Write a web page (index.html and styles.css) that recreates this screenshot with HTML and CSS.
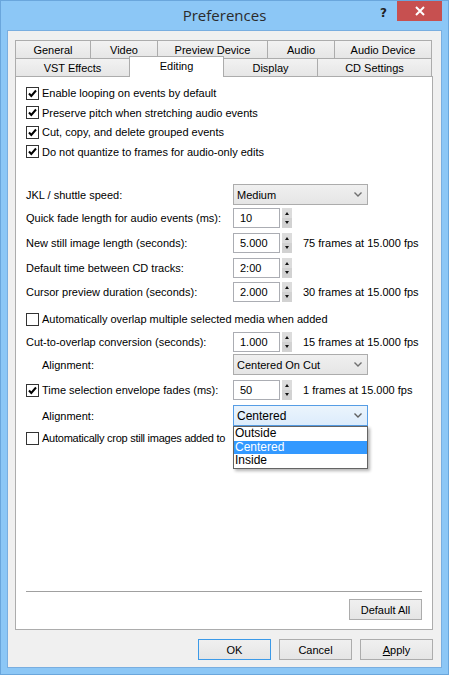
FILE: index.html
```html
<!DOCTYPE html>
<html>
<head>
<meta charset="utf-8">
<title>Preferences</title>
<link rel="stylesheet" href="styles.css">
</head>
<body>
<div class="window">
  <div class="titlebar">
    <div></div>
    <div class="title">Preferences</div>
    <div class="caption-btns">
      <span class="help">?</span>
      <span class="close"><svg width="10" height="10" viewBox="0 0 10 10"><path d="M1 1 L9 9 M9 1 L1 9" stroke="#fff" stroke-width="2"/></svg></span>
    </div>
  </div>
  <div class="client">
    <div class="tabs">
      <div class="tabrow row1">
        <div class="tab w76">General</div>
        <div class="tab w68">Video</div>
        <div class="tab w111">Preview Device</div>
        <div class="tab w68">Audio</div>
        <div class="tab w98 last">Audio Device</div>
      </div>
      <div class="tabrow row2">
        <div class="tab w115">VST Effects</div>
        <div class="tab w95 active">Editing</div>
        <div class="tab w95">Display</div>
        <div class="tab w115 last">CD Settings</div>
      </div>
    </div>
    <div class="panel">
      <div class="content">
        <div class="cbrow h20"><span class="cb checked"><svg width="11" height="11" viewBox="0 0 11 11"><path d="M2 5.5 L4.3 8 L9 2.5" fill="none" stroke="#000" stroke-width="2"/></svg></span><span>Enable looping on events by default</span></div>
        <div class="cbrow h19"><span class="cb checked"><svg width="11" height="11" viewBox="0 0 11 11"><path d="M2 5.5 L4.3 8 L9 2.5" fill="none" stroke="#000" stroke-width="2"/></svg></span><span>Preserve pitch when stretching audio events</span></div>
        <div class="cbrow h20"><span class="cb checked"><svg width="11" height="11" viewBox="0 0 11 11"><path d="M2 5.5 L4.3 8 L9 2.5" fill="none" stroke="#000" stroke-width="2"/></svg></span><span>Cut, copy, and delete grouped events</span></div>
        <div class="cbrow h19"><span class="cb checked"><svg width="11" height="11" viewBox="0 0 11 11"><path d="M2 5.5 L4.3 8 L9 2.5" fill="none" stroke="#000" stroke-width="2"/></svg></span><span>Do not quantize to frames for audio-only edits</span></div>

        <div class="row h21 mt23">
          <span class="label">JKL / shuttle speed:</span>
          <div class="combo"><span>Medium</span><svg class="chev" width="8" height="5" viewBox="0 0 8 5"><path d="M0.5 0.5 L4 4 L7.5 0.5" fill="none" stroke="#707070" stroke-width="1.4"/></svg></div>
        </div>
        <div class="row h20 mt3">
          <span class="label">Quick fade length for audio events (ms):</span>
          <div class="spin"><span class="input">10</span><svg class="arrows" width="10" height="20" viewBox="0 0 10 20"><rect x="0" y="0" width="10" height="20" fill="#dcdcdc"/><rect x="0" y="10" width="10" height="10" fill="#d2d2d2"/><path d="M3 7 L5 4 L7 7 Z" fill="#111"/><path d="M3 13 L5 16 L7 13 Z" fill="#111"/></svg></div>
        </div>
        <div class="row h20 mt5">
          <span class="label">New still image length (seconds):</span>
          <div class="spin"><span class="input">5.000</span><svg class="arrows" width="10" height="20" viewBox="0 0 10 20"><rect x="0" y="0" width="10" height="20" fill="#dcdcdc"/><rect x="0" y="10" width="10" height="10" fill="#d2d2d2"/><path d="M3 7 L5 4 L7 7 Z" fill="#111"/><path d="M3 13 L5 16 L7 13 Z" fill="#111"/></svg></div>
          <span class="note">75 frames at 15.000 fps</span>
        </div>
        <div class="row h20 mt5">
          <span class="label">Default time between CD tracks:</span>
          <div class="spin"><span class="input">2:00</span><svg class="arrows" width="10" height="20" viewBox="0 0 10 20"><rect x="0" y="0" width="10" height="20" fill="#dcdcdc"/><rect x="0" y="10" width="10" height="10" fill="#d2d2d2"/><path d="M3 7 L5 4 L7 7 Z" fill="#111"/><path d="M3 13 L5 16 L7 13 Z" fill="#111"/></svg></div>
        </div>
        <div class="row h20 mt4">
          <span class="label">Cursor preview duration (seconds):</span>
          <div class="spin"><span class="input">2.000</span><svg class="arrows" width="10" height="20" viewBox="0 0 10 20"><rect x="0" y="0" width="10" height="20" fill="#dcdcdc"/><rect x="0" y="10" width="10" height="10" fill="#d2d2d2"/><path d="M3 7 L5 4 L7 7 Z" fill="#111"/><path d="M3 13 L5 16 L7 13 Z" fill="#111"/></svg></div>
          <span class="note">30 frames at 15.000 fps</span>
        </div>

        <div class="cbrow h20 mt7"><span class="cb"></span><span>Automatically overlap multiple selected media when added</span></div>
        <div class="row h20 mt3">
          <span class="label">Cut-to-overlap conversion (seconds):</span>
          <div class="spin"><span class="input">1.000</span><svg class="arrows" width="10" height="20" viewBox="0 0 10 20"><rect x="0" y="0" width="10" height="20" fill="#dcdcdc"/><rect x="0" y="10" width="10" height="10" fill="#d2d2d2"/><path d="M3 7 L5 4 L7 7 Z" fill="#111"/><path d="M3 13 L5 16 L7 13 Z" fill="#111"/></svg></div>
          <span class="note">15 frames at 15.000 fps</span>
        </div>
        <div class="row h21 mt2">
          <span class="label indent">Alignment:</span>
          <div class="combo"><span>Centered On Cut</span><svg class="chev" width="8" height="5" viewBox="0 0 8 5"><path d="M0.5 0.5 L4 4 L7.5 0.5" fill="none" stroke="#707070" stroke-width="1.4"/></svg></div>
        </div>
        <div class="row h20 mt5">
          <span class="label cblabel"><span class="cb checked"><svg width="11" height="11" viewBox="0 0 11 11"><path d="M2 5.5 L4.3 8 L9 2.5" fill="none" stroke="#000" stroke-width="2"/></svg></span><span>Time selection envelope fades (ms):</span></span>
          <div class="spin"><span class="input">50</span><svg class="arrows" width="10" height="20" viewBox="0 0 10 20"><rect x="0" y="0" width="10" height="20" fill="#dcdcdc"/><rect x="0" y="10" width="10" height="10" fill="#d2d2d2"/><path d="M3 7 L5 4 L7 7 Z" fill="#111"/><path d="M3 13 L5 16 L7 13 Z" fill="#111"/></svg></div>
          <span class="note">1 frames at 15.000 fps</span>
        </div>
        <div class="row h21 mt5">
          <span class="label indent">Alignment:</span>
          <div class="combo focused"><span>Centered</span><svg class="chev" width="8" height="5" viewBox="0 0 8 5"><path d="M0.5 0.5 L4 4 L7.5 0.5" fill="none" stroke="#606060" stroke-width="1.4"/></svg>
            <div class="droplist">
              <div class="item">Outside</div>
              <div class="item sel">Centered</div>
              <div class="item">Inside</div>
            </div>
          </div>
        </div>
        <div class="cbrow h20 mt2"><span class="cb"></span><span class="tight">Automatically crop still images added to</span></div>
      </div>
      <div class="footer">
        <div class="sep"></div>
        <div class="footer-btns"><span class="btn">Default All</span></div>
      </div>
    </div>
    <div class="buttons">
      <span class="btn default">OK</span>
      <span class="btn">Cancel</span>
      <span class="btn"><u>A</u>pply</span>
    </div>
  </div>
</div>
</body>
</html>
```
FILE: styles.css
```css
* { box-sizing: border-box; }
html, body { margin: 0; padding: 0; }
body {
  width: 449px;
  height: 675px;
  overflow: hidden;
  font-family: "Liberation Sans", Arial, sans-serif;
  font-size: 11px;
  color: #000;
  background: #8cc7f6;
}
.window {
  width: 449px;
  height: 675px;
  background: #8cc7f6;
  border: 1px solid #6aa6dc;
  display: flex;
  flex-direction: column;
}
.titlebar {
  height: 29px;
  display: grid;
  grid-template-columns: 1fr auto 1fr;
  flex: none;
}
.title {
  font-family: "Open Sans", "Noto Sans", sans-serif;
  font-size: 15px;
  color: #2b2b2b;
  padding-top: 3px;
  line-height: 22px;
}
.caption-btns {
  display: flex;
  justify-content: flex-end;
  align-items: flex-start;
  padding-right: 6px;
}
.help {
  font-family: "DejaVu Sans", sans-serif;
  font-weight: bold;
  font-size: 12px;
  color: #222;
  margin-top: 5px;
  margin-right: 10px;
}
.close {
  width: 45px;
  height: 20px;
  background: #c75050;
  display: flex;
  align-items: center;
  justify-content: center;
}
.client {
  flex: 1;
  margin: 0 6px 6px 6px;
  background: #f0f0f0;
  border: 1px solid #79aee0;
  padding: 9px 0 0 7px;
  display: flex;
  flex-direction: column;
}
.tabs { display: flex; flex-direction: column; }
.tabrow { display: flex; height: 18px; align-items: flex-start; }
.tab {
  height: 18px;
  border: 1px solid #acacac;
  border-bottom: none;
  margin-left: -1px;
  background: linear-gradient(#f2f2f2, #e6e6e6);
  display: flex;
  align-items: center;
  justify-content: center;
  padding-top: 1px;
  white-space: nowrap;
}
.tab:first-child { margin-left: 0; }
.tab.active {
  background: #fff;
  height: 21px;
  margin-top: -2px;
  position: relative;
  z-index: 1;
  padding-top: 0;
  padding-bottom: 2px;
}
.w76 { width: 76px; }
.w68 { width: 68px; }
.w111 { width: 111px; }
.w98 { width: 98px; }
.w115 { width: 115px; }
.w95 { width: 95px; }
.panel {
  width: 418px;
  height: 554px;
  background: #fff;
  border: 1px solid #acacac;
  display: flex;
  flex-direction: column;
  flex: none;
}
.content {
  padding: 6px 0 0 10px;
  display: flex;
  flex-direction: column;
}
.cbrow, .row {
  display: flex;
  align-items: center;
  white-space: nowrap;
}
.h19 { height: 19px; }
.h20 { height: 20px; }
.h21 { height: 21px; }
.mt2 { margin-top: 2px; }
.mt3 { margin-top: 3px; }
.mt4 { margin-top: 4px; }
.mt5 { margin-top: 5px; }
.mt7 { margin-top: 7px; }
.mt23 { margin-top: 23px; }
.cb {
  width: 13px;
  height: 13px;
  border: 1px solid #333;
  background: #fff;
  margin-right: 3px;
  flex: none;
  display: flex;
  align-items: center;
  justify-content: center;
}
.tight {
  letter-spacing: -0.25px;
}
.label {
  width: 207px;
  flex: none;
  padding-left: 0;
}
.label.indent { padding-left: 16px; }
.cblabel { display: flex; align-items: center; }
.combo {
  width: 135px;
  height: 21px;
  border: 1px solid #acacac;
  background: linear-gradient(#f0f0f0, #e5e5e5);
  display: flex;
  align-items: center;
  justify-content: space-between;
  padding: 0 5px 0 3px;
  position: relative;
}
.combo.focused {
  border-color: #569de5;
  background: linear-gradient(#ebf4fc, #dcecfc);
  font-size: 12px;
}
.droplist {
  position: absolute;
  left: -1px;
  top: 20px;
  width: 135px;
  background: #fff;
  border: 1px solid #646464;
  box-shadow: 2px 2px 3px rgba(0,0,0,0.3);
  z-index: 5;
  font-size: 12px;
  padding: 0;
}
.item { height: 13.5px; line-height: 13px; padding-left: 1px; }
.item.sel { background: #3399ff; color: #fff; }
.spin { display: flex; align-items: center; gap: 2px; }
.input {
  width: 47px;
  height: 20px;
  border: 1px solid #abadb3;
  background: #fff;
  display: flex;
  align-items: center;
  padding-left: 6px;
}
.arrows { display: block; }
.note { margin-left: 11px; }
.footer {
  margin-top: auto;
  padding: 0 10px 9px 10px;
}
.sep { height: 1px; background: #a0a0a0; }
.footer-btns {
  display: flex;
  justify-content: flex-end;
  margin-top: 7px;
}
.btn {
  width: 73px;
  height: 21px;
  border: 1px solid #acacac;
  background: linear-gradient(#f0f0f0, #e5e5e5);
  display: flex;
  align-items: center;
  justify-content: center;
}
.btn.default { border-color: #3c9ae8; }
.buttons {
  display: flex;
  justify-content: flex-end;
  gap: 8px;
  margin-top: 9px;
  padding-right: 8px;
}
```
